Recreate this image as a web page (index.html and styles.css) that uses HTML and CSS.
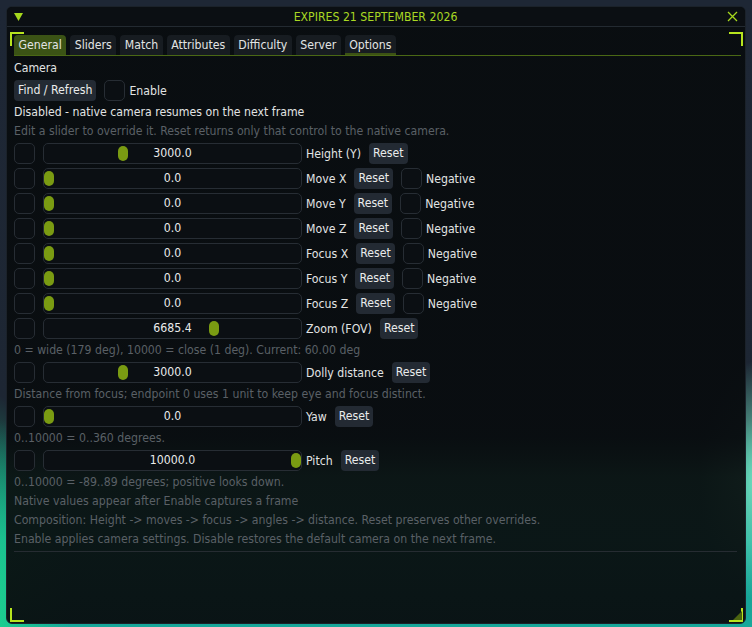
FILE: index.html
```html
<!DOCTYPE html>
<html>
<head>
<meta charset="utf-8">
<link rel="stylesheet" href="styles.css">
</head>
<body>
<div class="window">
  <div class="titlebar">
    <svg class="collapse" width="9" height="8" viewBox="0 0 9 8"><polygon points="0,0 9,0 4.5,8" fill="#a6d81e"/></svg>
    <div class="title">EXPIRES 21 SEPTEMBER 2026</div>
    <svg class="close" width="11" height="11" viewBox="0 0 11 11"><path d="M1 1 L10 10 M10 1 L1 10" stroke="#a6d81e" stroke-width="1.3" fill="none"/></svg>
  </div>
  <div class="content">
    <div class="tabbar">
      <div class="tab active">General</div>
      <div class="tab">Sliders</div>
      <div class="tab">Match</div>
      <div class="tab">Attributes</div>
      <div class="tab">Difficulty</div>
      <div class="tab">Server</div>
      <div class="tab hovered">Options</div>
    </div>
    <div class="panel">
      <div class="line">Camera</div>
      <div class="frow">
        <div class="btn">Find / Refresh</div>
        <div class="check gap8"></div>
        <div class="lbl">Enable</div>
      </div>
      <div class="line">Disabled - native camera resumes on the next frame</div>
      <div class="line dim">Edit a slider to override it. Reset returns only that control to the native camera.</div>

      <div class="frow">
        <div class="check"></div>
        <div class="slider"><span class="grab" style="--v:0.3"></span><span class="val">3000.0</span></div>
        <div class="lbl">Height (Y)</div>
        <div class="btn gap8">Reset</div>
      </div>
      <div class="frow">
        <div class="check"></div>
        <div class="slider"><span class="grab" style="--v:0"></span><span class="val">0.0</span></div>
        <div class="lbl">Move X</div>
        <div class="btn gap8">Reset</div>
        <div class="check gap8"></div>
        <div class="lbl">Negative</div>
      </div>
      <div class="frow">
        <div class="check"></div>
        <div class="slider"><span class="grab" style="--v:0"></span><span class="val">0.0</span></div>
        <div class="lbl">Move Y</div>
        <div class="btn gap8">Reset</div>
        <div class="check gap8"></div>
        <div class="lbl">Negative</div>
      </div>
      <div class="frow">
        <div class="check"></div>
        <div class="slider"><span class="grab" style="--v:0"></span><span class="val">0.0</span></div>
        <div class="lbl">Move Z</div>
        <div class="btn gap8">Reset</div>
        <div class="check gap8"></div>
        <div class="lbl">Negative</div>
      </div>
      <div class="frow">
        <div class="check"></div>
        <div class="slider"><span class="grab" style="--v:0"></span><span class="val">0.0</span></div>
        <div class="lbl">Focus X</div>
        <div class="btn gap8">Reset</div>
        <div class="check gap8"></div>
        <div class="lbl">Negative</div>
      </div>
      <div class="frow">
        <div class="check"></div>
        <div class="slider"><span class="grab" style="--v:0"></span><span class="val">0.0</span></div>
        <div class="lbl">Focus Y</div>
        <div class="btn gap8">Reset</div>
        <div class="check gap8"></div>
        <div class="lbl">Negative</div>
      </div>
      <div class="frow">
        <div class="check"></div>
        <div class="slider"><span class="grab" style="--v:0"></span><span class="val">0.0</span></div>
        <div class="lbl">Focus Z</div>
        <div class="btn gap8">Reset</div>
        <div class="check gap8"></div>
        <div class="lbl">Negative</div>
      </div>
      <div class="frow">
        <div class="check"></div>
        <div class="slider"><span class="grab" style="--v:0.66854"></span><span class="val">6685.4</span></div>
        <div class="lbl">Zoom (FOV)</div>
        <div class="btn gap8">Reset</div>
      </div>
      <div class="line dim">0 = wide (179 deg), 10000 = close (1 deg). Current: 60.00 deg</div>
      <div class="frow">
        <div class="check"></div>
        <div class="slider"><span class="grab" style="--v:0.3"></span><span class="val">3000.0</span></div>
        <div class="lbl">Dolly distance</div>
        <div class="btn gap8">Reset</div>
      </div>
      <div class="line dim">Distance from focus; endpoint 0 uses 1 unit to keep eye and focus distinct.</div>
      <div class="frow">
        <div class="check"></div>
        <div class="slider"><span class="grab" style="--v:0"></span><span class="val">0.0</span></div>
        <div class="lbl">Yaw</div>
        <div class="btn gap8">Reset</div>
      </div>
      <div class="line dim">0..10000 = 0..360 degrees.</div>
      <div class="frow">
        <div class="check"></div>
        <div class="slider"><span class="grab" style="--v:1"></span><span class="val">10000.0</span></div>
        <div class="lbl">Pitch</div>
        <div class="btn gap8">Reset</div>
      </div>
      <div class="line dim">0..10000 = -89..89 degrees; positive looks down.</div>
      <div class="line dim">Native values appear after Enable captures a frame</div>
      <div class="line dim">Composition: Height -&gt; moves -&gt; focus -&gt; angles -&gt; distance. Reset preserves other overrides.</div>
      <div class="line dim">Enable applies camera settings. Disable restores the default camera on the next frame.</div>
      <div class="separator"></div>
    </div>
  </div>
  <span class="corner tl"></span>
  <span class="corner tr"></span>
  <span class="corner bl"></span>
  <span class="corner br"></span>
  <span class="grip"></span>
</div>
</body>
</html>
```

FILE: styles.css
```css
html, body {
  margin: 0;
  padding: 0;
}
body {
  width: 752px;
  height: 627px;
  overflow: hidden;
  box-sizing: border-box;
  padding: 6px 6px 3px 6px;
  font-family: "DejaVu Sans Condensed", "DejaVu Sans", sans-serif;
  font-size: 12.2px;
  color: #e2e4e4;
  background:
    radial-gradient(ellipse 60px 120px at 760px 480px, rgba(120, 240, 205, 0.95), rgba(120, 240, 205, 0) 100%),
    radial-gradient(ellipse 90px 220px at -20px 610px, rgba(30, 215, 140, 1), rgba(30, 215, 140, 0) 100%),
    linear-gradient(to bottom, #1e2735 0px, #1d2633 420px, #175c5a 470px, #169f92 540px, #17a89a 627px);
}
.window {
  position: relative;
  width: 740px;
  height: 618px;
  box-sizing: border-box;
  border: 1px solid #1b222a;
  border-radius: 6px;
  background: linear-gradient(to bottom, rgba(9, 13, 16, 0.98) 0px, rgba(9, 13, 16, 0.98) 430px, rgba(11, 18, 18, 0.95) 470px, rgba(9, 14, 16, 0.96) 618px);
  overflow: hidden;
}
.titlebar {
  height: 19px;
  border-bottom: 1px solid #232a31;
  background: #0b0f13;
  display: flex;
  align-items: center;
  padding: 0 7px 0 7px;
}
.collapse {
  flex: none;
  margin-top: 1px;
}
.title {
  flex: 1;
  text-align: center;
  color: #a9d823;
  padding-left: 1px;
}
.close {
  flex: none;
}
.content {
  padding: 8px 8px 0 7px;
  display: flex;
  flex-direction: column;
}
.tabbar {
  display: flex;
  gap: 4px;
  height: 20px;
  border-bottom: 1px solid #4a6815;
  margin-right: -4px;
}
.tab {
  height: 20px;
  line-height: 20px;
  padding: 0 4.5px;
  background: #171c21;
  border-radius: 4px 4px 0 0;
  color: #e2e4e4;
}
.tab.active {
  background: #3b5315;
}
.tab.hovered {
  box-shadow: inset 0 -2px 0 #3c5214;
}
.panel {
  display: flex;
  flex-direction: column;
  gap: 4px;
  padding-top: 5px;
}
.line {
  height: 15px;
  line-height: 15px;
  white-space: nowrap;
}
.dim {
  color: #5a6066;
}
.frow {
  height: 21px;
  display: flex;
  align-items: center;
  white-space: nowrap;
}
.btn {
  height: 21px;
  line-height: 21px;
  padding: 0 4px;
  background: #232a33;
  border-radius: 4px;
  color: #eaecec;
}
.check {
  width: 19px;
  height: 19px;
  border: 1px solid #272d34;
  border-radius: 5px;
  background: #0b0f13;
  flex: none;
}
.gap8 {
  margin-left: 8px;
}
.lbl {
  margin-left: 4px;
}
.slider {
  position: relative;
  margin-left: 8px;
  width: 257px;
  height: 19px;
  border: 1px solid #272d34;
  border-radius: 5px;
  background: #0b0f13;
  flex: none;
  text-align: center;
  line-height: 19px;
}
.grab {
  position: absolute;
  top: 2px;
  left: calc(var(--v) * 247px);
  width: 10px;
  height: 15px;
  border-radius: 5px;
  background: #7a9b12;
}
.val {
  position: relative;
  color: #eaecec;
}
.separator {
  height: 1px;
  background: #262c32;
}
.corner {
  position: absolute;
  width: 12px;
  height: 12px;
  border-color: #b6e41e;
  border-style: solid;
  border-width: 0;
}
.corner.tl {
  left: 3px;
  top: 25px;
  border-top-width: 2px;
  border-left-width: 2px;
}
.corner.tr {
  right: 2px;
  top: 25px;
  border-top-width: 2px;
  border-right-width: 2px;
}
.corner.bl {
  left: 3px;
  bottom: 1px;
  border-bottom-width: 2px;
  border-left-width: 2px;
}
.corner.br {
  right: 2px;
  bottom: 1px;
  border-bottom-width: 2px;
  border-right-width: 2px;
}
.grip {
  position: absolute;
  right: 3px;
  bottom: 3px;
  width: 0;
  height: 0;
  border-left: 9px solid transparent;
  border-bottom: 9px solid #4b6410;
}
```
